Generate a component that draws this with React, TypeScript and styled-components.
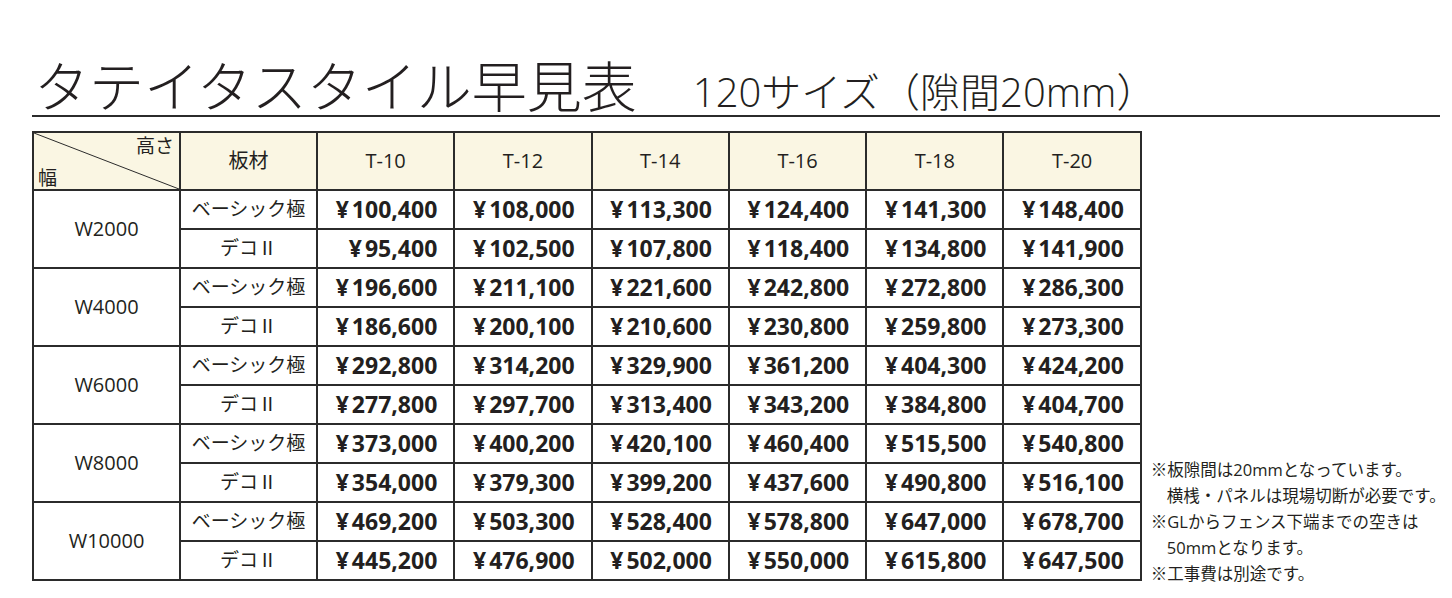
import React from "react";
import styled, { createGlobalStyle } from "styled-components";

const Global = createGlobalStyle`
  html, body { margin: 0; padding: 0; background: #fff; }
  body { font-family: "Open Sans", "Noto Sans CJK JP", sans-serif; color: #231f20; }
`;

const Page = styled.div`
  width: 1452px;
  height: 598px;
  box-sizing: border-box;
  padding: 54px 12px 0 32px;
`;

const TitleBar = styled.div`
  display: flex;
  align-items: baseline;
  padding: 0 0 3px 2px;
  border-bottom: 2px solid #2b2b2b;
`;

const Title = styled.h1`
  margin: 0;
  font-family: "Noto Sans CJK JP", sans-serif;
  font-size: 55px;
  line-height: 58px;
  font-weight: 300;
`;

const Sub = styled.span`
  margin-left: 56px;
  font-size: 40px;
  font-weight: 300;
  line-height: 30px;
`;

const Body = styled.div`
  display: flex;
  align-items: flex-end;
  margin-top: 14px;
`;

const Table = styled.table`
  border-collapse: collapse;
  table-layout: fixed;
  width: 1108px;
`;

const Cell = styled.td<{ $head?: boolean; $price?: boolean; $noTop?: boolean }>`
  border: 2px solid #2b2b2b;
  ${(p) => (p.$noTop ? "border-top-width: 1px;" : "")}
  background: ${(p) => (p.$head ? "#faf6e3" : "#fff")};
  height: ${(p) => (p.$head ? "56px" : "37px")};
  padding: ${(p) => (p.$price ? "0 16px 0 0" : "0")};
  text-align: ${(p) => (p.$price ? "right" : "center")};
  vertical-align: middle;
  font-size: ${(p) => (p.$price ? "23px" : "19px")};
  font-weight: ${(p) => (p.$price ? 700 : 400)};
  white-space: nowrap;
  line-height: 1;
`;

const WidthCell = styled(Cell)`
  font-size: 20px;
`;

const HeadCell = styled(Cell).attrs({ as: "th" })`
  font-weight: 400;
  font-size: 20px;
`;

const CornerCell = styled(HeadCell)`
  position: relative;
`;

const Diag = styled.svg`
  position: absolute;
  inset: 0;
  width: 100%;
  height: 100%;
`;

const CornerTop = styled.span`
  position: absolute;
  top: 4px;
  right: 5px;
  font-size: 19px;
`;

const CornerBottom = styled.span`
  position: absolute;
  bottom: 1px;
  left: 4px;
  font-size: 19px;
`;

const Yen = styled.span`
  margin-right: 3px;
`;

const Notes = styled.div`
  margin-left: 9px;
  margin-bottom: -6px;
  font-size: 16.5px;
  line-height: 26px;
  white-space: nowrap;
`;

const NoteLine = styled.div<{ $indent?: boolean }>`
  padding-left: ${(p) => (p.$indent ? "16px" : "0")};
`;

const heights = ["T-10", "T-12", "T-14", "T-16", "T-18", "T-20"];

const data: { w: string; basic: string[]; deco: string[] }[] = [
  {
    w: "W2000",
    basic: ["100,400", "108,000", "113,300", "124,400", "141,300", "148,400"],
    deco: ["95,400", "102,500", "107,800", "118,400", "134,800", "141,900"],
  },
  {
    w: "W4000",
    basic: ["196,600", "211,100", "221,600", "242,800", "272,800", "286,300"],
    deco: ["186,600", "200,100", "210,600", "230,800", "259,800", "273,300"],
  },
  {
    w: "W6000",
    basic: ["292,800", "314,200", "329,900", "361,200", "404,300", "424,200"],
    deco: ["277,800", "297,700", "313,400", "343,200", "384,800", "404,700"],
  },
  {
    w: "W8000",
    basic: ["373,000", "400,200", "420,100", "460,400", "515,500", "540,800"],
    deco: ["354,000", "379,300", "399,200", "437,600", "490,800", "516,100"],
  },
  {
    w: "W10000",
    basic: ["469,200", "503,300", "528,400", "578,800", "647,000", "678,700"],
    deco: ["445,200", "476,900", "502,000", "550,000", "615,800", "647,500"],
  },
];

export default function App() {
  return (
    <>
      <Global />
      <Page>
        <TitleBar>
          <Title>タテイタスタイル早見表</Title>
          <Sub>120サイズ（隙間20mm）</Sub>
        </TitleBar>
        <Body>
          <Table>
            <colgroup>
              <col style={{ width: 147 }} />
              <col style={{ width: 137 }} />
              {heights.map((h) => (
                <col key={h} style={{ width: 137.3 }} />
              ))}
            </colgroup>
            <thead>
              <tr>
                <CornerCell $head>
                  <Diag viewBox="0 0 100 100" preserveAspectRatio="none">
                    <line x1="0" y1="0" x2="100" y2="100" stroke="#2b2b2b" strokeWidth="1" vectorEffect="non-scaling-stroke" />
                  </Diag>
                  <CornerTop>高さ</CornerTop>
                  <CornerBottom>幅</CornerBottom>
                </CornerCell>
                <HeadCell $head>板材</HeadCell>
                {heights.map((h) => (
                  <HeadCell $head key={h}>
                    {h}
                  </HeadCell>
                ))}
              </tr>
            </thead>
            <tbody>
              {data.map((g) => (
                <React.Fragment key={g.w}>
                  <tr>
                    <WidthCell rowSpan={2}>{g.w}</WidthCell>
                    <Cell>ベーシック極</Cell>
                    {g.basic.map((v, i) => (
                      <Cell $price key={i}>
                        <Yen>¥</Yen>
                        {v}
                      </Cell>
                    ))}
                  </tr>
                  <tr>
                    <Cell $noTop>デコⅡ</Cell>
                    {g.deco.map((v, i) => (
                      <Cell $price $noTop key={i}>
                        <Yen>¥</Yen>
                        {v}
                      </Cell>
                    ))}
                  </tr>
                </React.Fragment>
              ))}
            </tbody>
          </Table>
          <Notes>
            <NoteLine>※板隙間は20mmとなっています。</NoteLine>
            <NoteLine $indent>横桟・パネルは現場切断が必要です。</NoteLine>
            <NoteLine>※GLからフェンス下端までの空きは</NoteLine>
            <NoteLine $indent>50mmとなります。</NoteLine>
            <NoteLine>※工事費は別途です。</NoteLine>
          </Notes>
        </Body>
      </Page>
    </>
  );
}
